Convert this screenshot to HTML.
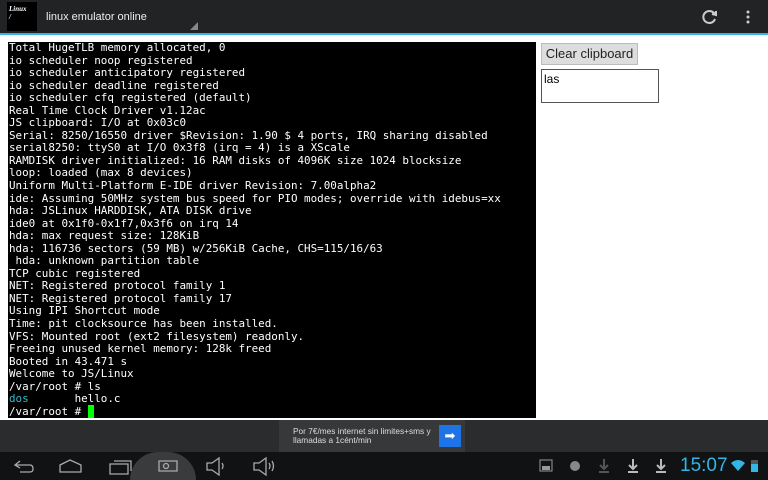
<!DOCTYPE html>
<html><head><style>
*{margin:0;padding:0;box-sizing:border-box}
body{width:768px;height:480px;overflow:hidden;background:#fff;font-family:"Liberation Sans",sans-serif;position:relative}
.top{position:absolute;left:0;top:0;width:768px;height:33px;background:#212325}
.blue{position:absolute;left:0;top:33px;width:768px;height:2px;background:#33b5e5}
.logo{position:absolute;left:7px;top:2px;width:30px;height:29px;background:#000;color:#fff;font:italic bold 7px "Liberation Serif",serif;padding:3px 2px}
.title{position:absolute;left:46px;top:11px;color:#eee;font-size:11px}
.term{position:absolute;left:8px;top:42px;width:528px;height:376px;background:#000;color:#fff;font:10.9px/12.55px "DejaVu Sans Mono",monospace;padding:0 0 0 1px;white-space:pre;overflow:hidden}
.btn{position:absolute;left:541px;top:43px;width:97px;height:22px;background:#ddd;border:1px solid #bbb;font-size:13px;color:#222;text-align:center;line-height:20px}
.ta{position:absolute;left:541px;top:69px;width:118px;height:34px;border:1px solid #555;font-size:12px;padding:2px 2px}
.adbar{position:absolute;left:0;top:420px;width:768px;height:32px;background:#2a2c2e}
.ad{position:absolute;left:279px;top:420px;width:186px;height:32px;background:#36383a;color:#ddd;font-size:8.3px;line-height:9px;padding:7px 0 0 14px}
.arrow{position:absolute;left:439px;top:425px;width:22px;height:22px;background:#1e73e6;color:#fff;font-size:13px;text-align:center;line-height:22px}
.nav{position:absolute;left:0;top:452px;width:768px;height:28px;background:#111214}
.clock{position:absolute;left:680px;top:455px;color:#33b5e5;font-size:19px}
</style></head><body>
<div class="top"></div><div class="blue"></div>
<div class="logo">Linux<br>/</div>
<div class="title">linux emulator online</div>
<svg style="position:absolute;left:190px;top:22px" width="8" height="8"><path d="M8 0L8 8L0 8Z" fill="#888"/></svg>
<svg style="position:absolute;left:702px;top:9px" width="16" height="16" fill="none" stroke="#ccc" stroke-width="2"><path d="M13 6A6 6 0 1 0 13 10"/><path d="M10 5L14 6L14 2" fill="#ccc"/></svg>
<svg style="position:absolute;left:746px;top:10px" width="4" height="14" fill="#ccc"><circle cx="2" cy="2" r="1.5"/><circle cx="2" cy="7" r="1.5"/><circle cx="2" cy="12" r="1.5"/></svg>
<div class="term">Total HugeTLB memory allocated, 0
io scheduler noop registered
io scheduler anticipatory registered
io scheduler deadline registered
io scheduler cfq registered (default)
Real Time Clock Driver v1.12ac
JS clipboard: I/O at 0x03c0
Serial: 8250/16550 driver $Revision: 1.90 $ 4 ports, IRQ sharing disabled
serial8250: ttyS0 at I/O 0x3f8 (irq = 4) is a XScale
RAMDISK driver initialized: 16 RAM disks of 4096K size 1024 blocksize
loop: loaded (max 8 devices)
Uniform Multi-Platform E-IDE driver Revision: 7.00alpha2
ide: Assuming 50MHz system bus speed for PIO modes; override with idebus=xx
hda: JSLinux HARDDISK, ATA DISK drive
ide0 at 0x1f0-0x1f7,0x3f6 on irq 14
hda: max request size: 128KiB
hda: 116736 sectors (59 MB) w/256KiB Cache, CHS=115/16/63
 hda: unknown partition table
TCP cubic registered
NET: Registered protocol family 1
NET: Registered protocol family 17
Using IPI Shortcut mode
Time: pit clocksource has been installed.
VFS: Mounted root (ext2 filesystem) readonly.
Freeing unused kernel memory: 128k freed
Booted in 43.471 s
Welcome to JS/Linux
/var/root # ls
<span style="color:#3bc">dos</span>       hello.c
/var/root # <span style="background:#0f0"> </span></div>
<div class="btn">Clear clipboard</div>
<div class="ta">las</div>
<div class="adbar"></div>
<div class="ad">Por 7€/mes internet sin limites+sms y<br>llamadas a 1cént/min</div>
<div class="arrow">➡</div>
<div class="nav"></div>
<div style="position:absolute;left:130px;top:452px;width:66px;height:28px;border-radius:33px 33px 0 0;background:#3a3b3d"></div>
<svg style="position:absolute;left:0;top:452px" width="300" height="28" fill="none" stroke="#aaa" stroke-width="1.3">
<path d="M20 9L15 13L20 16M15 13H30Q33 13 33 17Q33 20 30 20H20"/>
<path d="M60 13L70 8L81 13V20H60Z"/>
<path d="M110 12H128V22H110Z M114 9H131V19"/>
<path d="M159 9H177V19H159Z"/><circle cx="166" cy="14" r="2.5"/>
<path d="M207 11H212L219 6V23L212 18H207Z M222 11Q224 14 222 17"/>
<path d="M254 11H259L266 6V23L259 18H254Z M269 11Q271 14 269 17 M272 9Q275 14 272 19"/>
</svg>
<svg style="position:absolute;left:538px;top:457px" width="130" height="18">
<rect x="2" y="3" width="12" height="11" fill="none" stroke="#999"/><rect x="4" y="9" width="8" height="4" fill="#999"/>
<circle cx="37" cy="9" r="5" fill="#888"/>
<path d="M66 2V11M62 8L66 12L70 8M61 15H71" stroke="#555" stroke-width="2" fill="none"/>
<path d="M95 2V11M91 8L95 12L99 8M90 15H100" stroke="#bbb" stroke-width="2" fill="none"/>
<path d="M123 2V11M119 8L123 12L127 8M118 15H128" stroke="#bbb" stroke-width="2" fill="none"/>
</svg>
<div class="clock">15:07</div>
<svg style="position:absolute;left:730px;top:459px" width="30" height="14"><path d="M1 4Q8 -2 15 4L8 12Z" fill="#33b5e5"/><rect x="21" y="1" width="7" height="12" fill="#33b5e5"/><rect x="21" y="1" width="7" height="4" fill="#555"/></svg>
</body></html>
